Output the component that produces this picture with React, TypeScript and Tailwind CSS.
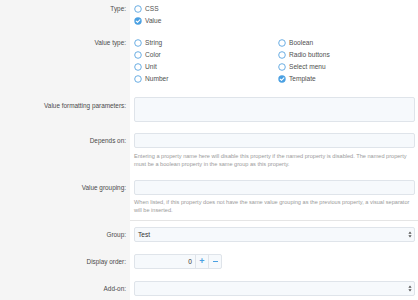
import React from "react";

const font = { fontFamily: '"Liberation Sans", Arial, sans-serif' };

function Radio({ checked, label }: { checked?: boolean; label: string }) {
  return (
    <div className="flex items-center h-[12px] gap-[3px]">
      <svg width="8" height="8" viewBox="0 0 8 8" className="shrink-0">
        {checked ? (
          <>
            <circle cx="4" cy="4" r="3.7" fill="#4aa0e2" />
            <path d="M2.2 4.1 L3.5 5.3 L5.9 2.8" stroke="#fff" strokeWidth="1.1" fill="none" strokeLinecap="round" strokeLinejoin="round" />
          </>
        ) : (
          <circle cx="4" cy="4" r="3.3" fill="#fff" stroke="#5aa5e0" strokeWidth="0.9" />
        )}
      </svg>
      <span className="text-[6.6px] text-[#505050] leading-none">{label}</span>
    </div>
  );
}

function Label({ children, cls }: { children: React.ReactNode; cls: string }) {
  return <div className={"text-right pr-[4px] text-[6.4px] text-[#4b4b4b] " + cls}>{children}</div>;
}

function SelectArrow() {
  return (
    <svg width="4" height="7" viewBox="0 0 4 7" className="shrink-0">
      <path d="M2 0.5 L3.6 2.8 L0.4 2.8 Z" fill="#555" />
      <path d="M2 6.5 L3.6 4.2 L0.4 4.2 Z" fill="#555" />
    </svg>
  );
}

export default function App() {
  return (
    <div
      className="w-[418px] h-[300px] overflow-hidden bg-[linear-gradient(to_right,#f5f5f5_130px,#ffffff_130px)]"
      style={font}
    >
      {/* Type */}
      <div className="grid grid-cols-[130px_1fr] pt-[3px]">
        <Label cls="leading-[12px]">Type:</Label>
        <div className="pl-[4px]">
          <Radio label="CSS" />
          <Radio label="Value" checked />
        </div>
      </div>

      {/* Value type */}
      <div className="grid grid-cols-[130px_1fr] mt-[10px]">
        <Label cls="leading-[12px]">Value type:</Label>
        <div className="pl-[4px] flex">
          <div className="w-[144px]">
            <Radio label="String" />
            <Radio label="Color" />
            <Radio label="Unit" />
            <Radio label="Number" />
          </div>
          <div>
            <Radio label="Boolean" />
            <Radio label="Radio buttons" />
            <Radio label="Select menu" />
            <Radio label="Template" checked />
          </div>
        </div>
      </div>

      {/* Value formatting parameters */}
      <div className="grid grid-cols-[130px_1fr] mt-[12px]">
        <Label cls="leading-[12px] pt-[3px]">Value formatting parameters:</Label>
        <div className="pl-[4px] pr-[3px]">
          <div className="h-[25px] rounded-[2px] border border-[#dfe4ea] bg-[#f6f9fc]" />
        </div>
      </div>

      {/* Depends on */}
      <div className="grid grid-cols-[130px_1fr] mt-[11px]">
        <Label cls="leading-[15px]">Depends on:</Label>
        <div className="pl-[4px] pr-[3px]">
          <div className="h-[15px] rounded-[2px] border border-[#dfe4ea] bg-[#f6f9fc]" />
          <div className="mt-[4px] text-[5.6px] leading-[8px] text-[#9a9a9a] whitespace-nowrap">
            Entering a property name here will disable this property if the named property is disabled. The named property
            <br />
            must be a boolean property in the same group as this property.
          </div>
        </div>
      </div>

      {/* Value grouping */}
      <div className="grid grid-cols-[130px_1fr] mt-[12px]">
        <Label cls="leading-[15px]">Value grouping:</Label>
        <div className="pl-[4px] pr-[3px] pb-[6px]">
          <div className="h-[15px] rounded-[2px] border border-[#dfe4ea] bg-[#f6f9fc]" />
          <div className="mt-[3px] text-[5.6px] leading-[8px] text-[#9a9a9a] whitespace-nowrap">
            When listed, if this property does not have the same value grouping as the previous property, a visual separator
            <br />
            will be inserted.
          </div>
        </div>
      </div>

      {/* Group */}
      <div className="grid grid-cols-[130px_1fr]">
        <Label cls="leading-[15px] pt-[7px]">Group:</Label>
        <div className="pl-[4px] pr-[3px] pt-[6px] border-t border-[#e5e5e5]">
          <div className="h-[15px] rounded-[2px] border border-[#dfe4ea] bg-[#f6f9fc] flex items-center justify-between pl-[3px] pr-[2px]">
            <span className="text-[6.6px] text-[#333]">Test</span>
            <SelectArrow />
          </div>
        </div>
      </div>

      {/* Display order */}
      <div className="grid grid-cols-[130px_1fr] mt-[12px]">
        <Label cls="leading-[15px]">Display order:</Label>
        <div className="pl-[4px]">
          <div className="w-[88px] h-[15px] rounded-[2px] border border-[#dfe4ea] bg-[#f6f9fc] flex">
            <div className="flex-1 flex items-center justify-end pr-[3px] text-[6.6px] text-[#333]">0</div>
            <div className="w-[13px] border-l border-[#dfe4ea] flex items-center justify-center text-[#4aa0e2] text-[9px] font-bold leading-none">+</div>
            <div className="w-[13px] border-l border-[#dfe4ea] flex items-center justify-center">
              <div className="w-[5px] h-[1.3px] bg-[#4aa0e2]" />
            </div>
          </div>
        </div>
      </div>

      {/* Add-on */}
      <div className="grid grid-cols-[130px_1fr] mt-[12px]">
        <Label cls="leading-[15px]">Add-on:</Label>
        <div className="pl-[4px] pr-[3px]">
          <div className="h-[15px] rounded-[2px] border border-[#dfe4ea] bg-[#f6f9fc] flex items-center justify-end pr-[2px]">
            <SelectArrow />
          </div>
        </div>
      </div>
    </div>
  );
}
